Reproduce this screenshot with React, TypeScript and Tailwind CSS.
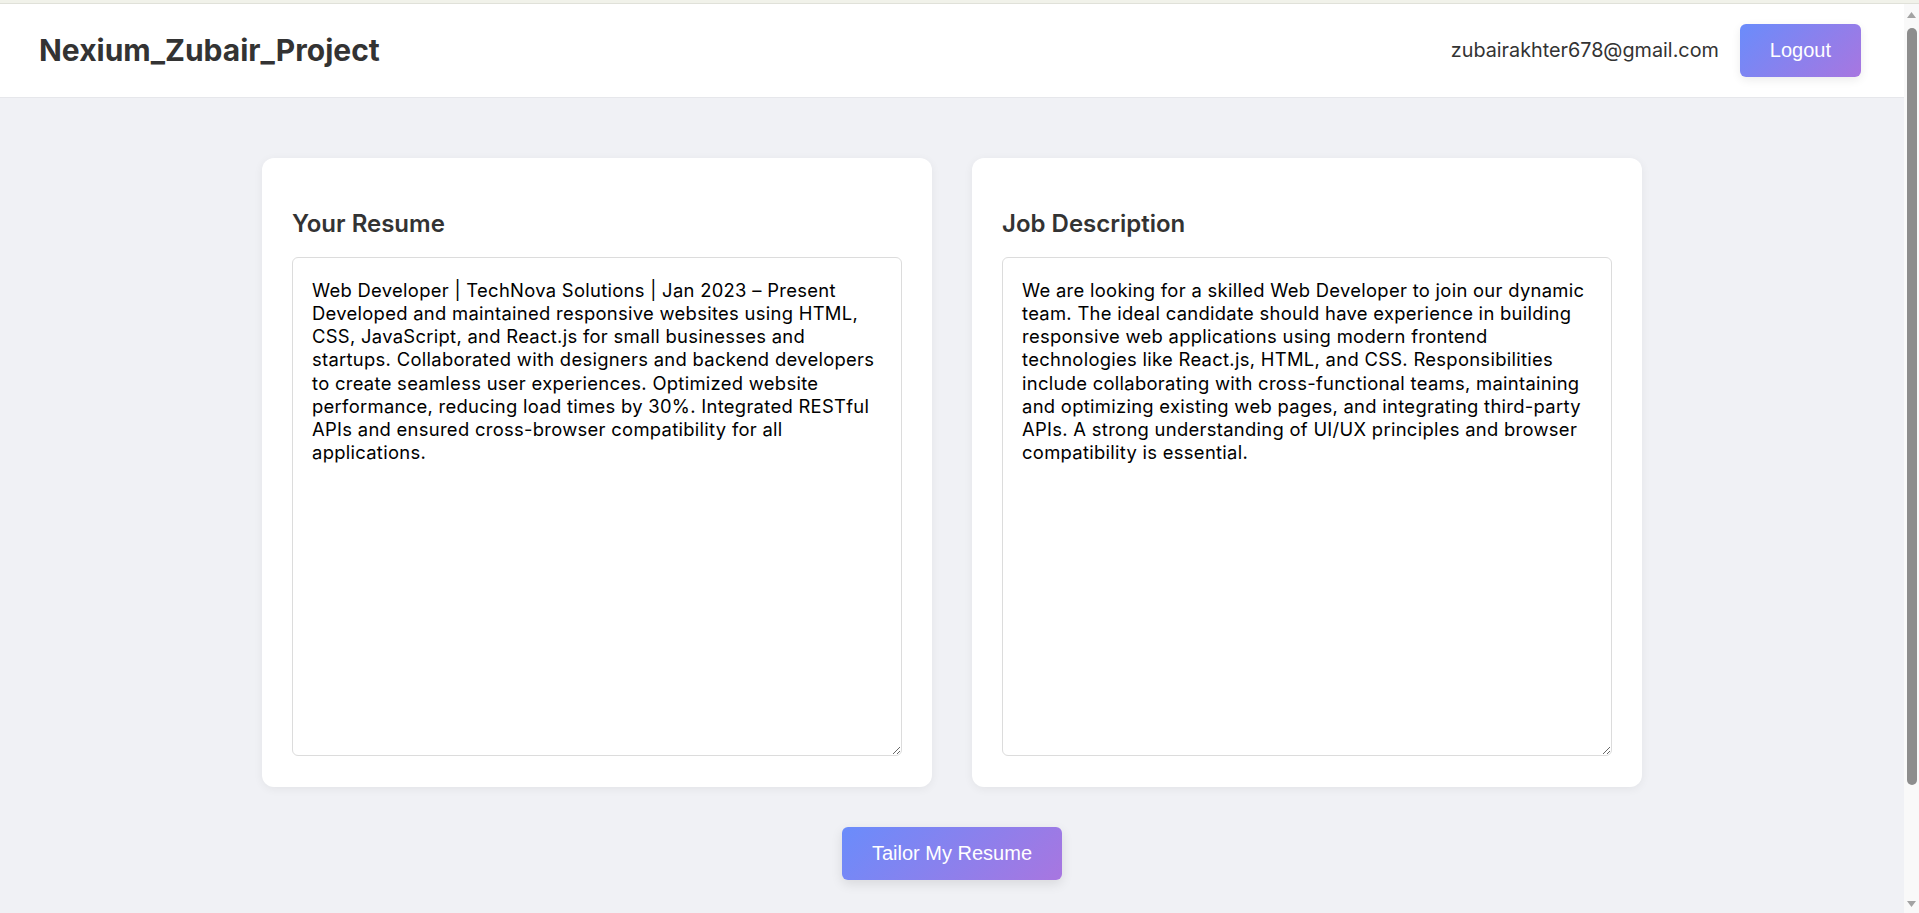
import React from "react";

const resumeText =
  "Web Developer | TechNova Solutions | Jan 2023 – Present\nDeveloped and maintained responsive websites using HTML,\nCSS, JavaScript, and React.js for small businesses and\nstartups. Collaborated with designers and backend developers\nto create seamless user experiences. Optimized website\nperformance, reducing load times by 30%. Integrated RESTful\nAPIs and ensured cross-browser compatibility for all\napplications.";

const jobText =
  "We are looking for a skilled Web Developer to join our dynamic\nteam. The ideal candidate should have experience in building\nresponsive web applications using modern frontend\ntechnologies like React.js, HTML, and CSS. Responsibilities\ninclude collaborating with cross-functional teams, maintaining\nand optimizing existing web pages, and integrating third-party\nAPIs. A strong understanding of UI/UX principles and browser\ncompatibility is essential.";

function Card({ title, value }: { title: string; value: string }) {
  return (
    <div className="bg-white rounded-[12px] shadow-[0_2px_10px_rgba(0,0,0,0.06)] pt-[51px] px-[30px] pb-[31px]">
      <h2 className="text-[24px] leading-[29px] h-[29px] font-semibold text-[#333] mb-[19px]">
        {title}
      </h2>
      <textarea
        wrap="off"
        defaultValue={value}
        className="block w-full h-[499px] border border-[#dcdcdc] rounded-[6px] pt-[21px] px-[19px] pb-[19px] text-[18.4px] tracking-[0.3px] leading-[23.15px] text-black font-['Inter',sans-serif] whitespace-pre overflow-hidden outline-none bg-white"
      />
    </div>
  );
}

function FakeScrollbar() {
  return (
    <div className="w-[15px] shrink-0 bg-[#f9f9f9] flex flex-col items-center">
      <svg width="9" height="6" viewBox="0 0 9 6" className="mt-[8px]">
        <path d="M0 6 L4.5 0 L9 6 Z" fill="#a3a3a3" />
      </svg>
      <div className="mt-[10px] w-[10px] h-[757px] rounded-full bg-[#8d8d8d]" />
      <div className="flex-1" />
      <svg width="9" height="6" viewBox="0 0 9 6" className="mb-[6px]">
        <path d="M0 0 L9 0 L4.5 6 Z" fill="#a3a3a3" />
      </svg>
    </div>
  );
}

export default function App() {
  return (
    <div className="h-[913px] flex flex-col overflow-hidden font-['Inter',sans-serif]">
      <div className="h-[4px] shrink-0 bg-[#f1f2ea] border-b border-[#e0e1d9]" />
      <div className="flex-1 flex min-h-0">
        <div className="flex-1 overflow-hidden bg-[#f0f1f5]">
          <header className="h-[94px] bg-white border-b border-[#e6e7eb] flex items-center justify-between pl-[39px] pr-[43px]">
            <h1 className="text-[30px] font-bold text-[#333]">
              Nexium_Zubair_Project
            </h1>
            <div className="flex items-center gap-[21px]">
              <span className="text-[19.8px] text-[#333]">zubairakhter678@gmail.com</span>
              <button className="font-['Liberation_Sans',Arial,sans-serif] text-[20px] leading-[23px] text-white px-[30px] py-[15px] rounded-[6px] bg-[linear-gradient(135deg,#6a8cfb_0%,#a876e0_100%)] shadow-[0_3px_10px_rgba(0,0,0,0.08)]">
                Logout
              </button>
            </div>
          </header>
          <main className="pt-[60px] pb-[170px] flex flex-col items-center">
            <div className="w-[1380px] grid grid-cols-2 gap-[40px]">
              <Card title="Your Resume" value={resumeText} />
              <Card title="Job Description" value={jobText} />
            </div>
            <button className="mt-[40px] font-['Liberation_Sans',Arial,sans-serif] text-[20px] leading-[23px] text-white px-[30px] py-[15px] rounded-[6px] bg-[linear-gradient(135deg,#6a8cfb_0%,#a876e0_100%)] shadow-[0_4px_12px_rgba(0,0,0,0.1)]">
              Tailor My Resume
            </button>
          </main>
        </div>
        <FakeScrollbar />
      </div>
    </div>
  );
}
